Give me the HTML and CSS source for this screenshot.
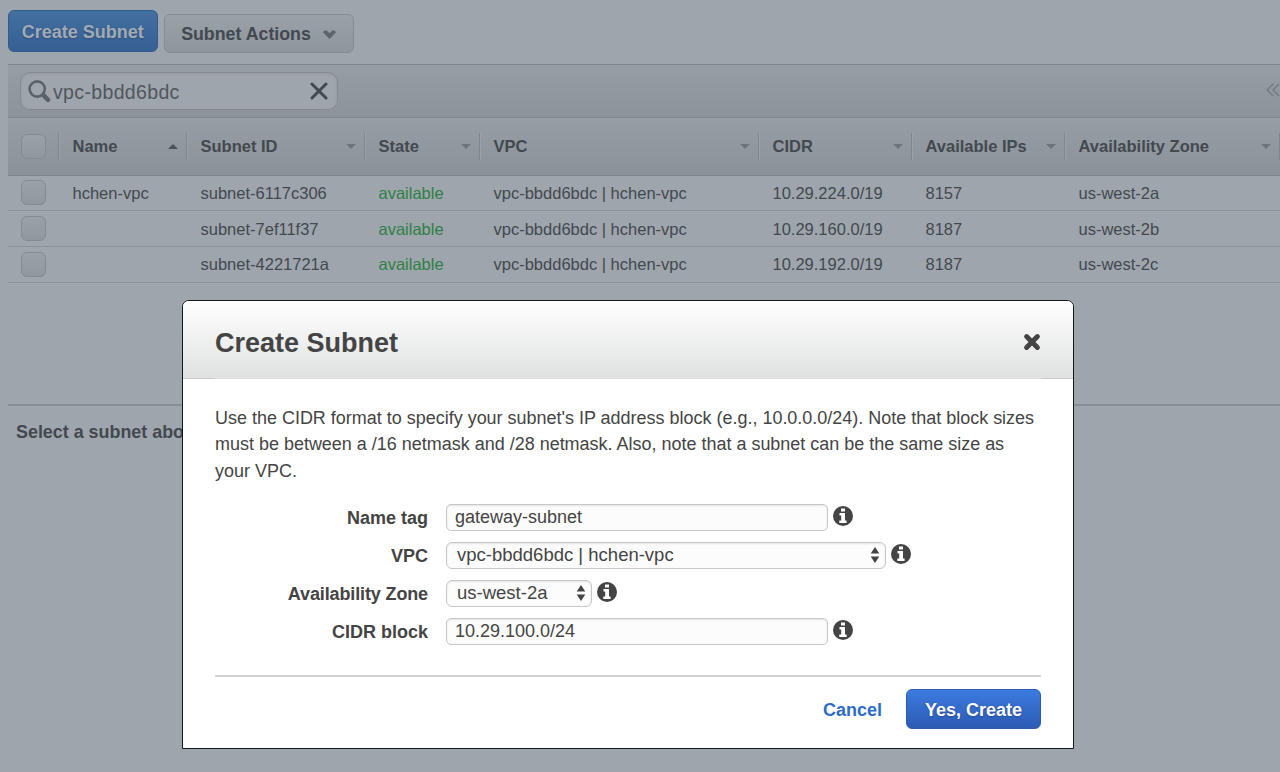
FILE: index.html
```
<!DOCTYPE html>
<html lang="en">
<head>
<meta charset="utf-8">
<title>Subnets</title>
<link rel="stylesheet" href="styles.css">
</head>
<body>
<svg class="defs" width="0" height="0" aria-hidden="true">
  <symbol id="info" viewBox="0 0 20 20"><circle cx="10" cy="10" r="10" fill="#444"/><path d="M8 2.6h4v3H8zM6.5 7H12v7.4h1.6v2.6H6.3v-2.6h1.9V9.6H6.5z" fill="#fff"/></symbol>
  <symbol id="updown" viewBox="0 0 10 16"><path d="M5 0l4.3 6.6H.7zM5 16l4.3-6.6H.7z" fill="#444"/></symbol>
</svg>
<main class="console">
  <div class="actions">
    <button class="btn primary-dim"><span>Create Subnet</span></button>
    <button class="btn dropdown"><span>Subnet Actions</span>
      <svg width="13" height="9" viewBox="0 0 13 9"><path d="M0 2.2Q2-.9 4 .8l2.5 2.4L9 .8q2-1.7 4 1.4L6.5 9z" fill="#5d646a"/></svg>
    </button>
  </div>
  <div class="toolbar">
    <div class="search">
      <svg width="23" height="23" viewBox="0 0 23 23" fill="none" stroke="#5b6268"><circle cx="9.2" cy="9" r="7.6" stroke-width="2.6"/><path d="M15.4 15.2l4.6 4.6" stroke-width="4.5" stroke-linecap="round"/></svg>
      <span class="term">vpc-bbdd6bdc</span>
      <svg class="clear" width="18" height="18" viewBox="0 0 18 18"><path d="M2 2l14 14M16 2L2 16" stroke="#42494f" stroke-width="3" stroke-linecap="round"/></svg>
    </div>
    <svg class="pager" width="14" height="14" viewBox="0 0 14 14" fill="none" stroke="#737a80" stroke-width="1.4"><path d="M7.2 1l-6 6 6 6M13 1L7 7l6 6"/></svg>
  </div>
  <div class="row head">
    <span class="pick"><i class="box"></i></span>
    <span class="th"><b>Name</b><i class="arrow up"></i></span>
    <span class="th"><b>Subnet ID</b><i class="arrow"></i></span>
    <span class="th"><b>State</b><i class="arrow"></i></span>
    <span class="th"><b>VPC</b><i class="arrow"></i></span>
    <span class="th"><b>CIDR</b><i class="arrow"></i></span>
    <span class="th"><b>Available IPs</b><i class="arrow"></i></span>
    <span class="th"><b>Availability Zone</b><i class="arrow"></i></span>
    <span class="th"></span>
  </div>
  <div class="row"><span class="pick"><i class="box"></i></span><span>hchen-vpc</span><span>subnet-6117c306</span><span class="ok">available</span><span>vpc-bbdd6bdc | hchen-vpc</span><span>10.29.224.0/19</span><span>8157</span><span>us-west-2a</span></div>
  <div class="row"><span class="pick"><i class="box"></i></span><span></span><span>subnet-7ef11f37</span><span class="ok">available</span><span>vpc-bbdd6bdc | hchen-vpc</span><span>10.29.160.0/19</span><span>8187</span><span>us-west-2b</span></div>
  <div class="row"><span class="pick"><i class="box"></i></span><span></span><span>subnet-4221721a</span><span class="ok">available</span><span>vpc-bbdd6bdc | hchen-vpc</span><span>10.29.192.0/19</span><span>8187</span><span>us-west-2c</span></div>
  <div class="detail">Select a subnet abo</div>
</main>
<section class="dialog" role="dialog">
  <header class="dialog-head">
    <h1>Create Subnet</h1>
    <svg width="18" height="18" viewBox="0 0 18 18"><path d="M3.6 3.6l10.8 10.8M14.4 3.6L3.6 14.4" stroke="#444" stroke-width="5" stroke-linecap="round"/></svg>
  </header>
  <div class="dialog-body">
    <p class="intro">Use the CIDR format to specify your subnet's IP address block (e.g., 10.0.0.0/24). Note that block sizes<br>must be between a /16 netmask and /28 netmask. Also, note that a subnet can be the same size as<br>your VPC.</p>
    <div class="form">
      <label>Name tag</label><div class="control"><span class="field">gateway-subnet</span><svg class="info"><use href="#info"/></svg></div>
      <label>VPC</label><div class="control"><span class="field select wide"><span>vpc-bbdd6bdc | hchen-vpc</span><svg class="updown"><use href="#updown"/></svg></span><svg class="info"><use href="#info"/></svg></div>
      <label class="tight">Availability Zone</label><div class="control"><span class="field select narrow"><span>us-west-2a</span><svg class="updown"><use href="#updown"/></svg></span><svg class="info"><use href="#info"/></svg></div>
      <label>CIDR block</label><div class="control"><span class="field">10.29.100.0/24</span><svg class="info"><use href="#info"/></svg></div>
    </div>
    <footer><a class="cancel">Cancel</a><button class="submit">Yes, Create</button></footer>
  </div>
</section>
</body>
</html>
```
FILE: styles.css
```
* { box-sizing: border-box; }
body {
  margin: 0; width: 1280px; height: 772px; overflow: hidden; position: relative;
  background: #9fa5ac; color: #42494f;
  font-family: "Liberation Sans", Arial, sans-serif; font-size: 16.5px;
}
.defs { display: none; }
svg { flex: none; }
.console { padding-left: 8px; height: 772px; display: flex; flex-direction: column; }
.actions { height: 64px; padding-top: 10px; display: flex; gap: 7px; flex: none; }
.btn {
  display: flex; align-items: center; justify-content: center; padding: 2px 0 0;
  font: bold 18px "Liberation Sans", Arial, sans-serif; white-space: nowrap;
}
.primary-dim {
  width: 149.5px; height: 42px; color: #a2aab3; border: 1.5px solid #315c90; border-radius: 6px;
  background: linear-gradient(#42709f, #375f95); text-shadow: 0 1px 2px #2d4f7b;
}
.dropdown {
  width: 190px; height: 39px; margin: 4px 0 0 -1px; gap: 12px; color: #42494f; font-size: 17.8px;
  border: 1px solid #858b92; border-radius: 6px; background: linear-gradient(#9ba1a8, #8f959c);
}
.toolbar {
  height: 54px; flex: none; display: flex; align-items: center; justify-content: space-between;
  padding-left: 12px; border-top: 1px solid #80868d; border-bottom: 1px solid #80868d;
  background: linear-gradient(#979da4, #8d939a);
}
.search {
  width: 318px; height: 38px; display: flex; align-items: center; padding: 0 9px 0 7px;
  border: 1.5px solid #858b91; border-radius: 10px; background: #9fa5ac;
  box-shadow: inset 0 1px 3px #92989f;
}
.term { font-size: 19.5px; letter-spacing: .35px; margin-left: 2px; flex: 1; color: #50575d; padding-top: 3px; }
.pager { margin-top: -3px; }
.row {
  display: grid; grid-template-columns: 50px 128px 178px 115px 279px 153px 153px 214.5px 1.5px;
  height: 35.7px; align-items: center; border-bottom: 1px solid #8c9299; flex: none; white-space: nowrap;
}
.row > span { padding: 1px 0 0 14.5px; }
.row > .pick { padding: 0 0 0 13px; }
.head { height: 57.5px; background: linear-gradient(#979da4, #8c9299); border-top: 1px solid #9ba1a8; border-bottom-color: #80868d; }
.head > .th {
  height: 27px; padding: 0 8px 0 13.5px; display: flex; align-items: center; justify-content: space-between;
  border-left: 1px solid #80868d; box-shadow: inset 1px 0 #9ba1a8;
}
.head > .th:last-child { padding: 0; }
.arrow { border: 5px solid transparent; border-top-color: #6d747a; border-bottom: 0; }
.arrow.up { border: 5px solid transparent; border-bottom-color: #4b5258; border-top: 0; }
.box {
  display: block; width: 25px; height: 25px; border: 1.5px solid #858b92; border-radius: 6px;
  background: linear-gradient(#9ba1a8, #91979e);
}
.ok { color: #2f7f47; }
.detail { margin-top: 121.5px; border-top: 2px solid #8a9097; padding: 15.5px 8px; font-weight: bold; font-size: 17.9px; line-height: 20px; white-space: nowrap; }

.dialog {
  position: absolute; left: 182px; top: 300px; width: 892px; height: 449px;
  border: 1.5px solid #15181b; border-radius: 7px 7px 0 0; background: #fff; color: #444; overflow: hidden;
}
.dialog-head {
  height: 78px; padding: 4px 32px 0; display: flex; align-items: center; justify-content: space-between;
  background:
    linear-gradient(#c9cbca, #c9cbca) left bottom / 32px 1px no-repeat,
    linear-gradient(#c9cbca, #c9cbca) right bottom / 32px 1px no-repeat,
    linear-gradient(#fff, #dfe1e0);
}
h1 { margin: 2px 0 0; font-size: 27px; line-height: 32px; }
.dialog-body { padding: 25.5px 32px 0; }
.intro { margin: 0; font-size: 17.98px; line-height: 26.7px; white-space: nowrap; }
.form {
  display: grid; grid-template-columns: 213px 1fr; column-gap: 18px; grid-auto-rows: 38.1px;
  align-items: center; margin-top: 13.5px; font-size: 18px;
}
.form label { font-weight: bold; text-align: right; font-size: 18px; padding-top: 2px; white-space: nowrap; }
.form .tight { letter-spacing: -.13px; }
.control { display: flex; align-items: center; gap: 5px; }
.info { width: 20px; height: 20px; margin-top: -3px; }
.field {
  width: 381.5px; height: 27px; padding: 1px 9px 0 8px; display: flex; align-items: center; justify-content: space-between;
  border: 1.5px solid #c7c7c7; border-radius: 5px; background: #fcfcfc; box-shadow: inset 0 1px 2px #e4e4e4; white-space: nowrap;
}
.select { padding: 0 5px 0 10px; border-radius: 6px; font-size: 18.5px; }
.wide { width: 439.5px; }
.narrow { width: 146px; }
.updown { width: 10px; height: 16px; }
footer {
  margin-top: 25px; border-top: 2px solid #d0d3d2; padding-top: 12px;
  display: flex; align-items: center; justify-content: flex-end; gap: 24px; font-weight: bold;
}
.cancel { color: #2f6cc8; font-size: 18px; padding-top: 2px; }
.submit {
  width: 135px; height: 40px; padding: 2px 0 0; border: 1px solid #2c5bb0; border-radius: 6px; color: #fff;
  background: linear-gradient(#3c7bdf, #2d5bb4); font: bold 18px "Liberation Sans", Arial, sans-serif;
  text-shadow: 0 1px 2px #244b94;
}
```
